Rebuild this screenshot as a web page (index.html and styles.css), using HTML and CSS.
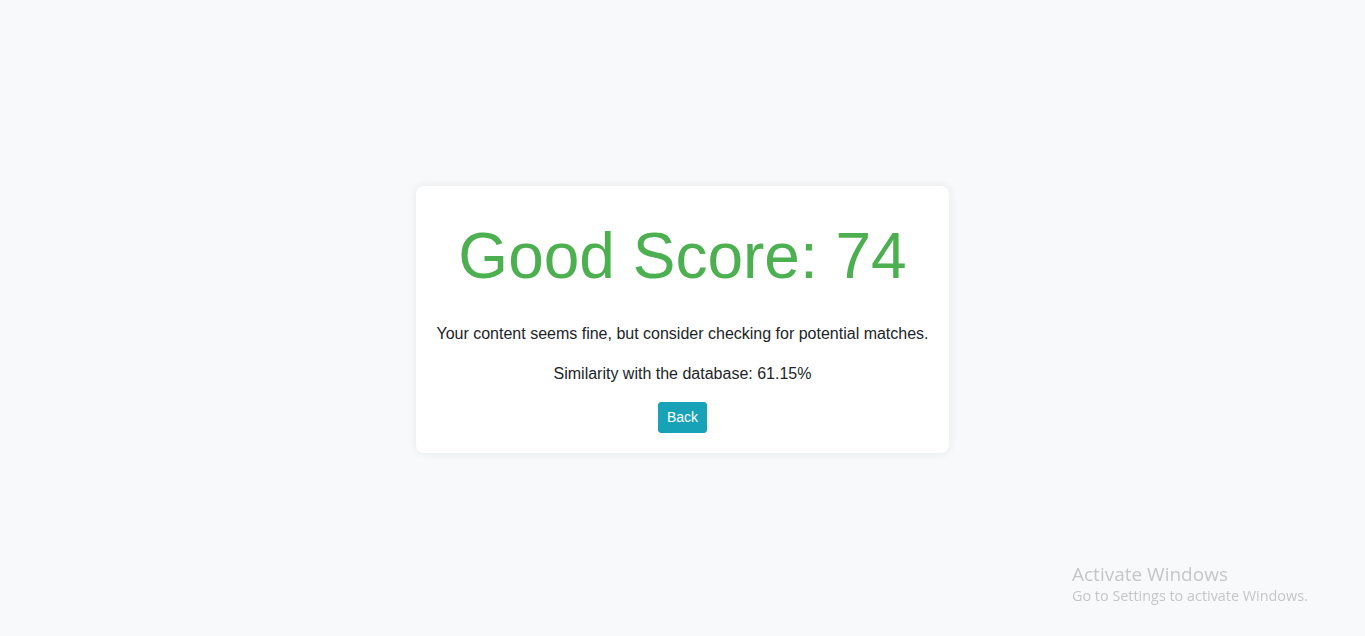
FILE: index.html
```html
<!DOCTYPE html>
<html lang="en">
<head>
<meta charset="utf-8">
<title>Result</title>
<link rel="stylesheet" href="styles.css">
</head>
<body>
  <main class="page">
    <section class="card">
      <h1 class="score">Good Score: 74</h1>
      <p class="message">Your content seems fine, but consider checking for potential matches.</p>
      <p class="message">Similarity with the database: 61.15%</p>
      <button class="btn-back" type="button">Back</button>
    </section>
  </main>
  <div class="activate">
    <div class="activate-title">Activate Windows</div>
    <div class="activate-sub">Go to Settings to activate Windows.</div>
  </div>
</body>
</html>
```

FILE: styles.css
```css
* { box-sizing: border-box; }
html, body { margin: 0; padding: 0; }
body {
  background: #f8f9fa;
  font-family: "Liberation Sans", Arial, sans-serif;
  font-size: 16px;
  line-height: 1.5;
  color: #212529;
}
.page {
  min-height: 100vh;
  display: flex;
  align-items: center;
  justify-content: center;
}
.card {
  background: #fff;
  border-radius: 8px;
  box-shadow: 0 0 10px rgba(0, 0, 0, 0.08);
  padding: 21px 20px 20px;
  text-align: center;
  margin-top: 3px;
}
.score {
  margin: 11px 0 28px;
  font-size: 64px;
  font-weight: 400;
  line-height: 1.2;
  color: #4caf50;
}
.message {
  margin: 0 0 16px;
  white-space: nowrap;
}
.btn-back {
  font-family: "Liberation Sans", Arial, sans-serif;
  font-size: 14px;
  line-height: 1.5;
  padding: 4px 8px;
  color: #fff;
  background: #17a2b8;
  border: 1px solid #17a2b8;
  border-radius: 3px;
  cursor: pointer;
  display: inline-block;
}
.activate {
  position: fixed;
  left: 1072px;
  top: 562px;
  color: #c4c6c9;
  font-family: "Open Sans", "Noto Sans", sans-serif;
  pointer-events: none;
}
.activate-title {
  font-size: 19px;
  line-height: 24px;
}
.activate-sub {
  font-size: 14.4px;
  line-height: 20px;
}
```
